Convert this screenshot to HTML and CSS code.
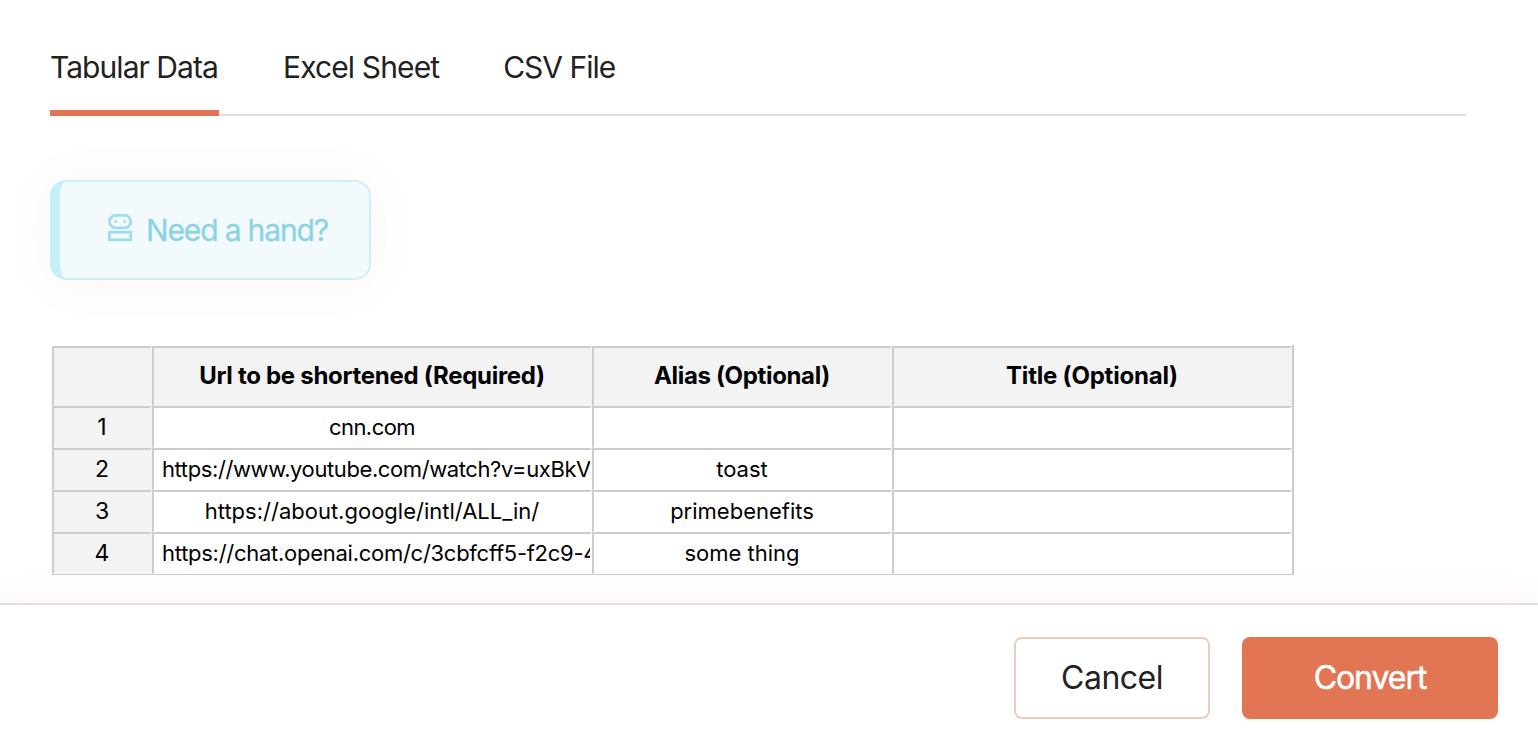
FILE: index.html
```
<!DOCTYPE html>
<html lang="en">
<head>
<meta charset="utf-8">
<title>Bulk shorten</title>
<link rel="stylesheet" href="styles.css">
</head>
<body>
<main class="content">
  <nav class="tabs">
    <a class="tab tab-active"><span class="t-tab1">Tabular Data</span></a>
    <a class="tab"><span class="t-tab2">Excel Sheet</span></a>
    <a class="tab"><span class="t-tab3">CSV File</span></a>
  </nav>
  <button class="help">
    <svg class="robot" viewBox="0 0 26 28" fill="none" stroke="currentColor" stroke-width="2.8">
      <rect x="1.4" y="1.4" width="21.4" height="12.4" rx="6.2"/>
      <rect x="1.4" y="18.2" width="21.4" height="7.6"/>
      <circle cx="7.7" cy="7.5" r="1.5" fill="currentColor" stroke="none"/>
      <circle cx="16.5" cy="7.5" r="1.5" fill="currentColor" stroke="none"/>
    </svg>
    <span class="t-help">Need a hand?</span>
  </button>
  <div class="sheet">
    <div class="cell head"></div>
    <div class="cell head"><span class="t-h1">Url to be shortened (Required)</span></div>
    <div class="cell head"><span class="t-h2">Alias (Optional)</span></div>
    <div class="cell head"><span class="t-h3">Title (Optional)</span></div>
    <div class="cell num">1</div>
    <div class="cell"><span class="t-cnn">cnn.com</span></div>
    <div class="cell"></div>
    <div class="cell"></div>
    <div class="cell num">2</div>
    <div class="cell long"><span class="t-yt">https://www.youtube.com/watch?v=uxBkV</span></div>
    <div class="cell"><span class="t-toast">toast</span></div>
    <div class="cell"></div>
    <div class="cell num">3</div>
    <div class="cell"><span class="t-about">https://about.google/intl/ALL_in/</span></div>
    <div class="cell"><span class="t-prime">primebenefits</span></div>
    <div class="cell"></div>
    <div class="cell num">4</div>
    <div class="cell long"><span class="t-chat">https://chat.openai.com/c/3cbfcff5-f2c9-4</span></div>
    <div class="cell"><span class="t-some">some thing</span></div>
    <div class="cell"></div>
  </div>
</main>
<footer class="actions">
  <button class="btn cancel"><span class="t-cancel">Cancel</span></button>
  <button class="btn convert"><span class="t-convert">Convert</span></button>
</footer>
</body>
</html>
```
FILE: styles.css
```
* { box-sizing: border-box; }
body {
  margin: 0;
  width: 1538px;
  height: 739px;
  overflow: hidden;
  display: flex;
  flex-direction: column;
  background: #fff;
  color: #222;
  font-family: Inter, "Liberation Sans", sans-serif;
}
span { white-space: nowrap; }
button { font-family: inherit; margin: 0; padding: 0; }
.content { height: 603px; flex: none; padding: 20px 72px 0 50px; }
.tabs {
  display: flex;
  gap: 64px;
  height: 96px;
  border-bottom: 2px solid #dedede;
}
.tab {
  height: 96px;
  padding-top: 27px;
  font-size: 30px;
  line-height: 40px;
  border-bottom: 6px solid transparent;
}
.tab-active { width: 169px; border-color: #e27553; }
.t-tab1 { letter-spacing: -0.95px; }
.t-tab2 { letter-spacing: -0.88px; }
.t-tab3 { letter-spacing: -1px; }
.help {
  display: flex;
  align-items: center;
  width: 321px;
  height: 100px;
  margin-top: 64px;
  padding-left: 46px;
  border: 2px solid #d0eef6;
  border-left: 10px solid #c3f0fa;
  border-radius: 16px;
  background: #f2fafd;
  color: #8dd3e4;
  font-size: 30px;
  box-shadow: 0 2px 44px rgba(226, 117, 83, 0.08);
}
.robot { width: 26px; height: 28px; margin: -5px 12px 0 2px; color: #a2dcea; }
.t-help { letter-spacing: -1.15px; -webkit-text-stroke: 0.3px #8dd3e4; }
.sheet {
  display: grid;
  grid-template-columns: 100px 440px 300px 400px;
  grid-template-rows: 60px repeat(4, 42px);
  width: 1242px;
  height: 230px;
  margin: 65px 0 0 2px;
  padding-top: 1px;
  border-right: 2px solid #ccc;
  color: #000;
  font-size: 22px;
  background: linear-gradient(#ccc, #ccc) 0 229px / 100% 1px no-repeat;
}
.cell {
  display: flex;
  align-items: center;
  justify-content: center;
  min-width: 0;
  overflow: hidden;
  padding-bottom: 2px;
  border: solid;
  border-width: 2px 2px 1px 2px;
  border-color: #ccc #fff #fff #ccc;
  background: #fff;
}
.head, .num { background: #f3f3f3; border-right-color: #f3f3f3; border-bottom-color: #f3f3f3; }
.num { font-size: 23px; }
.head { font-size: 24px; font-weight: 700; }
.long { justify-content: flex-start; padding-left: 8px; }
.t-h1 { letter-spacing: -0.28px; }
.t-h2 { letter-spacing: -0.35px; }
.t-h3 { letter-spacing: -0.22px; }
.t-cnn { letter-spacing: -0.55px; }
.t-yt { letter-spacing: -0.4px; }
.t-chat { letter-spacing: -0.27px; }
.actions {
  position: relative;
  flex: none;
  display: flex;
  justify-content: flex-end;
  gap: 32px;
  height: 136px;
  padding: 32px 40px 0 0;
  border-top: 2px solid #e2dfde;
  background: #fff;
  box-shadow: 0 0 32px rgba(226, 117, 83, 0.1);
}
.btn { height: 82px; padding-bottom: 1px; border-radius: 8px; font-size: 32px; }
.cancel { width: 196px; border: 2px solid #f0cbc0; background: #fff; color: #222; }
.convert { width: 256px; border: 0; background: #e27553; color: #fff; -webkit-text-stroke: 0.5px #fff; }
.t-cancel { letter-spacing: -0.5px; }
.t-convert { letter-spacing: -1.05px; }
```
